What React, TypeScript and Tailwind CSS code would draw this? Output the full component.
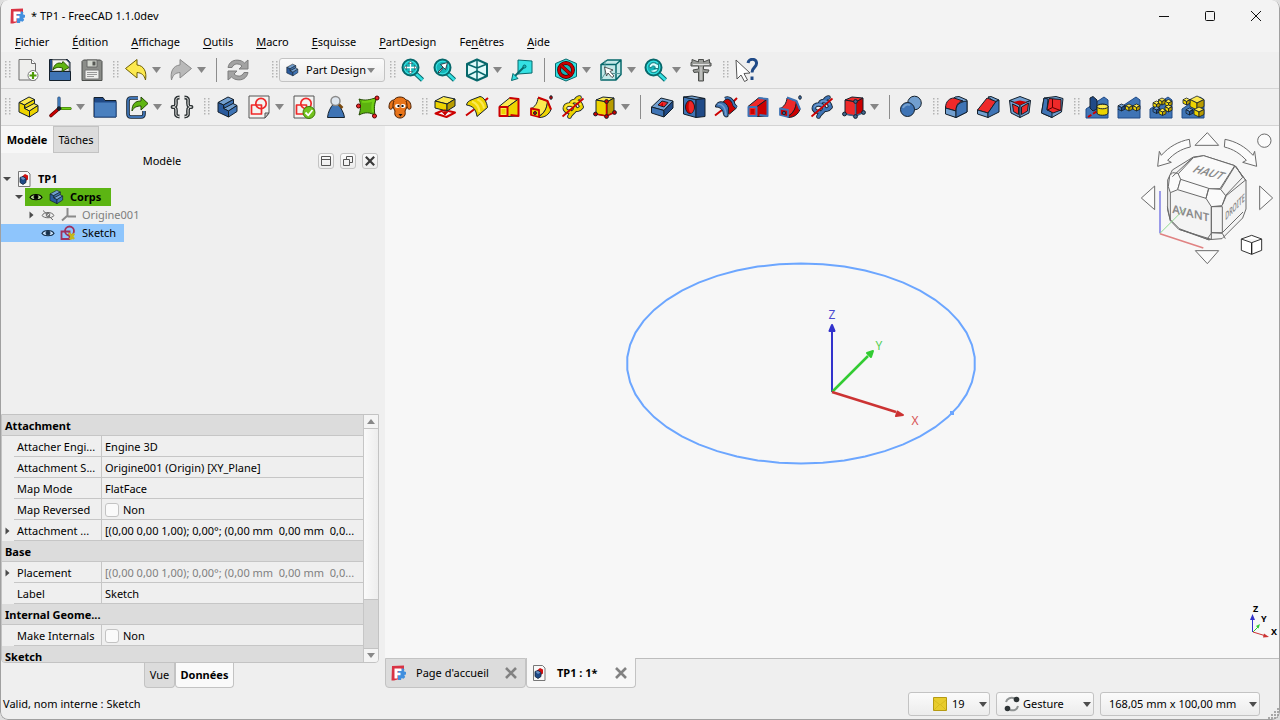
import type { ReactNode } from "react";

const K = "#14202c";
const Y1 = "#fce94f";
const Y2 = "#edd400";
const Y3 = "#b89c00";
const B1 = "#729fcf";
const B2 = "#3f74b5";
const B3 = "#204a87";
const R1 = "#ef2929";
const R2 = "#cc0000";
const T1 = "#34e0e2";
const T2 = "#16b5b8";
const T3 = "#06686b";

function Step({ a, b, c }: { a: string; b: string; c: string }) {
  return (
    <>
      <path d="M3 7.500 13 2l5.500 2.500L8.500 10z" fill={a} />
      <path d="M8.500 10l10-5.500v4l-9 5z" fill={c} />
      <path d="M8.500 13.500l9.500-5 4 2-8.500 5.500z" fill={a} />
      <path d="M3 7.500l5.500 2.500v3.500l5 2.500v6L3 17z" fill={b} />
      <path d="M13.500 16l8.500-5.500v6L13.500 22z" fill={c} />
    </>
  );
}

function Cube({ x, y, s, a, b, c }: { x: number; y: number; s: number; a: string; b: string; c: string }) {
  const h = s / 2;
  const q = s / 4;
  return (
    <g strokeWidth="0.8">
      <path d={`M${x} ${y + q}l${h} ${-q} ${h} ${q} ${-h} ${q}z`} fill={a} />
      <path d={`M${x} ${y + q}l${h} ${q}v${h}l${-h} ${-q}z`} fill={b} />
      <path d={`M${x + s} ${y + q}l${-h} ${q}v${h}l${h} ${-q}z`} fill={c} />
    </g>
  );
}

const yc = { a: Y1, b: Y2, c: Y3 };
const bc = { a: B1, b: B2, c: B3 };

const loupe = (
  <>
    <path d="M14.500 15.500l7 6.500" stroke={T3} strokeWidth="4.500" />
    <path d="M14.500 15.500l7 6.500" stroke={T1} strokeWidth="2.500" />
    <circle cx="9.500" cy="9.500" r="8" fill={T1} stroke={T3} strokeWidth="2" />
    <circle cx="9.500" cy="9.500" r="5.800" fill={T2} stroke="none" />
  </>
);

const loftShape = (f1: string, f2: string, edge: string) => (
  <>
    <path d="M2 11.500 12.500 3l9 1-11 8z" fill={f1} />
    <path d="M10.500 12l11-8v17l-11 .5z" fill={f2} />
    <path d="M12.500 3l9 1v17l-8-1" fill="none" stroke={edge} strokeWidth="2" />
    <path d="M2.500 12h8v9h-8z" fill={f1} stroke={edge} strokeWidth="2" />
    <path d="M4.500 14h4v5h-4z" fill={f2} stroke="none" />
  </>
);

const pipeShape = (f1: string, f2: string, edge: string) => (
  <>
    <path d="M2 13.500C6 12 8.500 8 9 3l9.500 3c0 7-3 12-8.500 15z" fill={f1} />
    <path d="M10 21.500c5-3 8-8 8.500-15.500l3.500 8.500c-2 5-6 8-12 8z" fill={f2} />
    <path d="M9 2.500l9.500 3.500 3.500 8.500" fill="none" stroke={edge} strokeWidth="2" />
    <path d="M2 13.500l8 1.500v7l-8-2z" fill={f2} stroke={edge} strokeWidth="1.800" />
    <circle cx="6" cy="18" r="1.500" fill={edge} />
    <ellipse cx="22" cy="2.500" rx="1.300" ry="1.800" fill={edge} />
  </>
);

const helixShape = (f1: string, f2: string) => {
  const coil = "M4 14C3 8 13 8 14.500 14M10 8.500c1-4 9-3 10.500 3.500M14.500 14C13 17.500 9.500 18 8.500 21.500M15 5c1-1.500 2-2.500 3.500-2.500M4 14c.5 2 3 3 5 2.500M14.500 14c2 1.500 4 .5 6-2";
  return (
    <>
      <g fill="none" strokeLinecap="round">
        <path d={coil} strokeWidth="4.600" />
        <path d={coil} stroke={f1} strokeWidth="3" />
        <path d="M4.500 12C6 8.500 12 8.500 13.500 12.500M11 7c2-2 7-1 8.500 2.500" stroke={f2} strokeWidth="1.300" />
      </g>
      <path d="M1.500 21.500 22.500 3.500" stroke={R2} strokeWidth="1.800" />
    </>
  );
};

const primShape = (f1: string, f2: string, f3: string, dot: string) => (
  <>
    <path d="M3 5l7-3 11 1-7 4z" fill={f1} />
    <path d="M3 5l11 2v14L3 19z" fill={f2} />
    <path d="M14 7l7-4v14l-7 4z" fill={f3} />
    <path d="M13.500 7v14L2.500 19M13.500 21l8-3.500" fill="none" stroke={dot} strokeWidth="1.500" />
    <circle cx="13.500" cy="6.500" r="1.900" fill={dot} />
    <circle cx="2.500" cy="19" r="1.900" fill={dot} />
    <circle cx="13.500" cy="21.500" r="1.900" fill={dot} />
    <circle cx="21.500" cy="17.500" r="1.900" fill={dot} />
  </>
);

const wedge = <path d="M1 14 19 2l4 3v18H1z" fill={B2} stroke={B3} />;

const sketchBase = (
  <>
    <path d="M2 1h20v17l-4 5H2z" fill="#f4f4f2" stroke="#555" />
    <path d="M22 18h-4v5z" fill="#ccc" stroke="#555" />
    <path d="M4.500 10h10v9h-10z" fill="none" stroke={R1} strokeWidth="1.700" />
    <circle cx="14" cy="8.500" r="5.200" fill="none" stroke={R1} strokeWidth="1.700" />
  </>
);

const brace = "M9.500 2.500C5 2.500 6 5 6 8s-.5 4-3.500 4C5.500 12 6 13 6 16s-1 5.500 3.500 5.500M14.500 2.500c4.500 0 3.500 2.500 3.500 5.500s.5 4 3.500 4c-3 0-3.500 1-3.500 4s1 5.500-3.500 5.500";

const icons: Record<string, ReactNode> = {
  newDoc: (
    <>
      <path d="M3 1.500h12.500l4 4V22H3z" fill="#eeeeec" stroke="#6b6b6b" />
      <path d="M15.500 1.500v4h4" fill="#fff" stroke="#6b6b6b" />
      <circle cx="17" cy="17.500" r="5" fill="#fff" stroke="#777" />
      <path d="M17 14v7M13.500 17.500h7" stroke="#4e9a06" strokeWidth="2.200" />
    </>
  ),
  open: (
    <>
      <path d="M1.500 21V1.500h18l2.500 3V21z" fill={B3} />
      <path d="M4.500 2H18l3 3v8H4.500z" fill="#f4f4f4" stroke="#999" />
      <path d="M1.500 13.500h21v9h-21z" fill={B2} />
      <path d="M5 12c1-6 5-8 9-6.500l1-2 6 6-7 4 .5-3.500C11 9 7.500 9 5 12z" fill="#5fb512" stroke="#2d5a05" />
    </>
  ),
  save: (
    <>
      <path d="M2 3.500 3.500 2h17L22 3.500v19H2z" fill="#8b8d89" stroke="#4d4f4c" />
      <path d="M7 2h10v7H7z" fill="#d3d7cf" stroke="#666" />
      <path d="M12.500 3.500h3v4h-3z" fill="#555753" stroke="none" />
      <path d="M5 12h14v9H5z" fill="#eeeeec" stroke="#777" />
      <path d="M7 14.500h10M7 16.500h10M7 18.500h7" stroke="#999" />
    </>
  ),
  undo: <path d="M1.500 10.500 13 1.500V7c7 .5 10 7 8.500 15C20 17 18 15 13 14.500V20z" fill={Y1} stroke="#6d5d00" />,
  redo: <path d="M22.500 10.500 11 1.500V7C4 7.500 1 14 2.500 22 4 17 6 15 11 14.500V20z" fill="#b9b9b9" stroke="#8a8a8a" />,
  refresh: (
    <g fill="#a3a3a3" stroke="#7d7d7d">
      <path d="M2 9.500C3 4 8 1 14 2.500c2 .5 3 1.200 4.500 2.500L22 2v9h-9l3-3C13 5 8 5 6 9.500z" />
      <path d="M22 14.500c-1 5.500-6 8.500-12 7-2-.5-3-1.200-4.500-2.500L2 22v-9h9l-3 3c3 3 8 3 10-1.500z" />
    </g>
  ),
  body: <Step a={B1} b="#2a5a9c" c={B2} />,
  part: <Step a={Y1} b={Y2} c={Y2} />,
  fitAll: (
    <>
      {loupe}
      <path d="M9.500 4v11M4 9.500h11" stroke="#fff" strokeWidth="1.300" />
      <path d="M9.500 3l2 2.500h-4zM9.500 16l2-2.500h-4zM3 9.500l2.500-2v4zM16 9.500l-2.500-2v4z" fill="#fff" strokeWidth=".5" />
    </>
  ),
  fitSel: (
    <>
      {loupe}
      <path d="M5 14l5-5-2.500-2.500 7-2-2 7L10.500 9.500 6 15z" fill="#fff" strokeWidth=".8" />
    </>
  ),
  iso: (
    <g fill="#dffafa" stroke={T3} strokeWidth="2">
      <path d="M12 1.500 22 6v12l-10 4.500L2 18V6z" />
      <path d="M2 6l10 4 10-4M12 10v12M2 18l10-5 10 5M12 1.500v8" fill="none" strokeWidth="1.500" />
    </g>
  ),
  align: (
    <>
      <path d="M8 2l14 1v12l-14 1z" fill={T1} stroke={T3} />
      <path d="M14 9 4 19" stroke={T3} strokeWidth="2" />
      <path d="M1.500 22.500l1.500-7 5 5z" fill={T1} stroke={T3} />
      <circle cx="14.500" cy="8.500" r="1.500" fill={T2} stroke={T3} />
    </>
  ),
  drawStyle: (
    <>
      <path d="M12 1 22.500 5.500v13L12 23 1.500 18.500v-13z" fill={T1} stroke={T3} />
      <circle cx="12" cy="12" r="7" fill={T2} stroke="#3a0000" strokeWidth="3.800" />
      <circle cx="12" cy="12" r="7" fill="none" stroke={R2} strokeWidth="2.400" />
      <path d="M7 7.500l10 9" stroke="#3a0000" strokeWidth="3.600" />
      <path d="M7 7.500l10 9" stroke={R2} strokeWidth="2.400" />
    </>
  ),
  selBox: (
    <>
      <path d="M2 6.500 8.500 2H22l-5 4.500zM2 6.500h15V22H2zM17 6.500 22 2v14.500L17 22z" fill="#c4e8e8" stroke={T3} strokeWidth="1.500" />
      <path d="M6 2.500v13L2 22M6 15.500h15" fill="none" stroke="#5a9a9c" />
      <path d="M5.500 9l8.500 3-3 1.500 4 4.500-2 1.500-4-4.500-1.500 3z" fill="#fff" stroke="#333" strokeWidth=".8" />
    </>
  ),
  zoomSync: (
    <>
      {loupe}
      <path d="M5 8.500c1-4 6-5 8-2l1.500-1v5H10l1.500-1.500c-2-2-4-1-4.500 1zM14 11c-1 4-6 4-7.500 2" fill="#d9ffff" stroke={T3} strokeWidth=".8" />
    </>
  ),
  caliper: (
    <>
      <path d="M3 1.500 9.500 4V1.500h5V4l6-2.500V5H22v3h-7.500v3.500L20 12l-1.500 3-4-1v9h-5V14L5 14.500 4 12l5.500-1V8H2V4.500h1z" fill="#9a9c98" stroke="#4d4f4c" />
      <path d="M12 9v13M4 6.500h16" stroke="#e2e2e2" />
    </>
  ),
  help: (
    <>
      <path d="M2 2l14 13-6 .5 3.500 6.500-3 1.500-3.500-6.500-4 4z" fill="#fff" stroke="#555" />
      <path d="M14 5c.5-5 9-5 8.500.5 0 4-4.500 4-4.500 9" fill="none" stroke={B3} strokeWidth="3" />
      <path d="M16.500 18.500h3v3.500h-3z" fill={B3} stroke="none" />
    </>
  ),
  axes: (
    <g strokeLinecap="round">
      <path d="M11 13V3" stroke="#24466f" strokeWidth="3.200" />
      <path d="M11 13V3" stroke="#3f78b8" strokeWidth="2" />
      <path d="M12 13.500h10" stroke="#2f5b08" strokeWidth="3.200" />
      <path d="M12 13.500h10" stroke="#73d216" strokeWidth="2" />
      <path d="M10.500 14 3 20.500" stroke="#5e0000" strokeWidth="3.600" />
      <path d="M10.500 14 3 20.500" stroke={R2} strokeWidth="2.200" />
      <circle cx="11" cy="13.500" r="1.800" fill={K} />
    </g>
  ),
  folder: (
    <>
      <path d="M1 2.500h9l2 3H23V22H1z" fill={B3} />
      <path d="M1.500 7H23v15H1.500z" fill="#4a80bf" stroke={B3} />
    </>
  ),
  link: (
    <>
      <path d="M13 3H6Q3 3 3 6v13q0 3 3 3h10q3 0 3-3v-3" fill="none" stroke={K} strokeWidth="3.600" />
      <path d="M13 3H6Q3 3 3 6v13q0 3 3 3h10q3 0 3-3v-3" fill="none" stroke={B2} strokeWidth="1.800" />
      <path d="M7 16c0-7 3-10 9-10V2l7 6.500-7 6.500v-4c-4 0-7 1-9 5z" fill="#5fb512" stroke="#244a04" />
    </>
  ),
  braces: (
    <g fill="none">
      <path d={brace} stroke="#2e3436" strokeWidth="3.800" />
      <path d={brace} stroke="#eeeeec" strokeWidth="1" />
    </g>
  ),
  sketch: sketchBase,
  sketchOk: (
    <>
      {sketchBase}
      <circle cx="17" cy="17.500" r="6" fill="#73c21e" stroke="#3c7a06" />
      <path d="M13.500 17.500l2.800 2.800L20.500 15" fill="none" stroke="#fff" strokeWidth="1.800" />
    </>
  ),
  check: (
    <>
      <path d="M9.500 9h4.500c3 4 6 9 6.500 13.500H3.500C4 17 6.500 12 9.500 9z" fill={B2} />
      <circle cx="11.500" cy="6" r="4.500" fill="#dfe6ee" stroke="#8a8a8a" strokeWidth="1.500" />
      <path d="M15 9.500l3.500 3.500" stroke="#7a4a10" strokeWidth="2.500" />
    </>
  ),
  binder: (
    <>
      <path d="M3 4c6 2 10 1 18-1.500-3 6-3 12-2 18C14 17 9 17 3 20c2-6 2-11 0-16z" fill="#5cb30f" stroke="#244a04" />
      <path d="M6 6.500c5 1 8 0 12-1.500-2 4-2 8-1 12" fill="none" stroke="#73d216" strokeWidth="2" />
      <circle cx="21" cy="3" r="2" fill={R1} stroke="#500" />
      <circle cx="2.500" cy="11" r="2" fill={R1} stroke="#500" />
      <circle cx="18.500" cy="21" r="2" fill={R1} stroke="#500" />
    </>
  ),
  clone: (
    <>
      <path d="M6 5c2-4 10-4 12 0 3 0 5 3 5 7 0 3-3 3-4 0l-2 4c1 4-1 7-5 7s-6-3-5-7l-2-4c-1 3-4 3-4 0 0-4 2-7 5-7z" fill="#e8741a" stroke="#4a1e00" />
      <path d="M6 6c-1 2-1 4-1 6M18 6c1 2 1 4 1 6" fill="none" stroke="#4a1e00" />
      <ellipse cx="9.500" cy="11" rx="2.500" ry="2" fill="#fff" stroke="none" />
      <ellipse cx="15" cy="11" rx="2.500" ry="2" fill="#fff" stroke="none" />
      <path d="M9.500 10h2v2h-2zM13.500 10h2v2h-2zM10.500 19h4l-2 2.500z" fill="#111" stroke="none" />
    </>
  ),
  pad: (
    <>
      <path d="M2.500 18.500 11 15l11 2.500-8.500 4.500z" fill="#f4f4f4" stroke={R2} strokeWidth="2" />
      <path d="M2 6l8.500-4.500L22 4l-8 5z" fill={Y1} />
      <path d="M2 6l12 3v7L2 13z" fill={Y2} />
      <path d="M14 9l8-5v7l-8 5z" fill={Y3} />
      <path d="M12 14v4M9.500 17l2.500 3 2.500-3z" fill={R2} stroke={R2} />
    </>
  ),
  revolve: (
    <>
      <path d="M17 8l6-5M1 20.500l8-6" stroke={R2} strokeWidth="2" />
      <path d="M1.500 10C2 7 4 6 6 5l9-3.500c4 .5 7 6 7.500 11L12 21.500C11.500 18 10.500 15.500 9 13.500 7 11.500 5 10.500 1.500 10z" fill={Y2} />
      <path d="M7 6.500c4 1.500 7 5 7.500 10.500M12.500 4.500c3.500 1.500 6 4.500 6.500 9" fill="none" stroke={Y1} strokeWidth="2.200" />
    </>
  ),
  loft: loftShape(Y1, Y2, R2),
  pipe: pipeShape(Y1, Y2, R2),
  helix: helixShape(Y2, Y1),
  prim: primShape(Y1, Y2, Y3, R2),
  pocket: (
    <>
      <path d="M1.500 12 11 3l12 3-9 9.500z" fill={B1} />
      <path d="M1.500 12 14 15.500V22L1.500 18z" fill={B2} />
      <path d="M14 15.500 23 6v7l-9 9z" fill={B3} />
      <path d="M8 10l4-4 6 1.500-4 4.500z" fill={R1} />
      <path d="M10 10.500l3-3v3.500" fill={R2} stroke="none" />
    </>
  ),
  hole: (
    <>
      <path d="M1.500 2 14 4.500v18L1.500 19z" fill={B2} />
      <path d="M1.500 2 10 1l13 2.500-9 1z" fill={B1} />
      <path d="M14 4.500l9-1v18l-9 1z" fill={B3} />
      <ellipse cx="8" cy="12" rx="4.500" ry="6.500" fill={R2} />
      <path d="M8 6c5 2 5 10 1 12.500C6 16 6 9 8 6z" fill={R1} stroke="none" />
    </>
  ),
  groove: (
    <>
      <path d="M17 9l6-6M1 20.500l7-5.500" stroke={R2} strokeWidth="2" />
      <path d="M9 7.500C12 1.500 18 2 20 7l2.500 6-7 6L10 15z" fill={R2} />
      <path d="M1.500 11C3 5 12 5 14.500 13L14 21.500c-2 1-4 0-4.500-2-.5-5-3-7.500-8-7.500z" fill={B2} />
      <path d="M11 3.500C15 1.500 19 5 20 10l2.500 2.500" fill="none" strokeWidth="3.200" />
      <path d="M11 3.500C15 1.500 19 5 20 10l2.500 2.500" fill="none" stroke={B2} strokeWidth="1.800" />
      <path d="M4 9.500c4.500-1 7.500 3 8 11" fill="none" stroke={B1} strokeWidth="1.500" />
    </>
  ),
  subLoft: loftShape(R1, R2, B2),
  subPipe: pipeShape(R1, R2, B2),
  subHelix: helixShape(B2, B1),
  subPrim: primShape(R1, R1, R2, "#44688f"),
  boolean: (
    <>
      <circle cx="15.500" cy="8" r="6.800" fill={B1} />
      <circle cx="8.500" cy="14.500" r="7" fill={B2} />
      <path d="M4 13c1-3 4-4 7-3" fill="none" stroke={B1} strokeWidth="2" />
    </>
  ),
  fillet: (
    <>
      <path d="M11 2l4-.5 8 3.500v12l-11 5.500L1.500 18v-6z" fill={B1} />
      <path d="M1.500 13C1.500 6 6 3 10 3l9 3c-5 1-7 4-7 10z" fill={R1} />
      <path d="M12 16v6.500L1.500 19v-6z" fill={B1} />
      <path d="M12 22.500V16c0-6 3-9 11-10v11z" fill={B2} />
    </>
  ),
  chamfer: (
    <>
      <path d="M12 2l3-.5 8 3.500-4 2z" fill={B1} />
      <path d="M1.500 15 11 3l9 3.500L12 18z" fill={R1} />
      <path d="M1.500 15 12 18v4.500L1.500 19z" fill={B1} />
      <path d="M12 22.500V18l8-11.500 3-1.500v12z" fill={B2} />
    </>
  ),
  draft: (
    <>
      <path d="M1.500 5.500 12 1.500l10.500 4L12 10z" fill={B1} />
      <path d="M1.500 5.500 12 10v12.500L3 18z" fill={B1} />
      <path d="M22.500 5.500 12 10v12.500L21 18z" fill={B1} />
      <path d="M4.500 9l6 3v7.500l-5-3zM20.500 8l-7 4v7.500l6-3.500z" fill={R1} />
      <path d="M12 5.500l7 1.500-7 3-7-3z" fill={R2} stroke="none" />
    </>
  ),
  shell: (
    <>
      <path d="M4 3 16 1.500l7 2L21.500 17 12 22.500 1.500 18z" fill={B1} />
      <path d="M4 3l-2.500 15L12 22.500V17L7 15 8 4z" fill={B2} />
      <path d="M9 3.500l12 1V15l-8 3-6-3.500z" fill={R1} />
      <path d="M12.500 4v8.500L7.500 15M12.500 12.500l8 3" fill="none" stroke="#5a0000" />
    </>
  ),
  mirror: (
    <>
      <path d="M1 14l12-8 6-4 4 3v18H1z" fill={B2} stroke={B3} />
      <path d="M5 3l3-1.500L12 5v9l-4 2-3-3z" fill={B3} />
      <path d="M3 22 23 9" stroke={R2} strokeWidth="2" strokeDasharray="4 2" />
      <path d="M12 11.500c0-3 11-3 11 0V18c0 3-11 3-11 0z" fill={Y2} />
      <ellipse cx="17.500" cy="11.500" rx="5.500" ry="2.300" fill={Y1} />
    </>
  ),
  linear: (
    <>
      {wedge}
      <Cube x={1} y={9} s={7} {...bc} />
      <Cube x={8.500} y={9} s={7} {...yc} />
      <Cube x={16} y={9} s={7} {...yc} />
    </>
  ),
  polar: (
    <>
      {wedge}
      <Cube x={4} y={6} s={7} {...yc} />
      <Cube x={9.500} y={3} s={7} {...yc} />
      <Cube x={16} y={4.500} s={7} {...yc} />
      <Cube x={16} y={10} s={7} {...yc} />
      <Cube x={4} y={11.500} s={7} {...bc} />
      <Cube x={10} y={13.500} s={7} {...yc} />
    </>
  ),
  multi: (
    <>
      {wedge}
      <Cube x={9} y={1} s={14} {...yc} />
      <Cube x={2} y={3} s={7} {...yc} />
      <Cube x={5} y={13} s={7} {...bc} />
      <Cube x={13} y={12} s={10} {...yc} />
    </>
  ),
};

function Icon({ name, className = "size-6" }: { name: string; className?: string }) {
  return (
    <svg viewBox="0 0 24 24" className={className} fill="none" stroke={K} strokeWidth="1" strokeLinejoin="round" aria-hidden="true">
      {icons[name]}
    </svg>
  );
}

function Caret({ className = "" }: { className?: string }) {
  return (
    <svg viewBox="0 0 8 5" className={`h-[5px] w-2 ${className}`} aria-hidden="true">
      <path d="M0 0h8L4 5z" fill="currentColor" />
    </svg>
  );
}

function Tool({ name, label, menu = false }: { name: string; label: string; menu?: boolean }) {
  return (
    <div className="flex shrink-0 items-center">
      <button type="button" aria-label={label} title={label} className="flex h-8 w-8 items-center justify-center">
        <Icon name={name} />
      </button>
      {menu && (
        <button type="button" aria-label={`${label} : options`} className="flex h-8 w-[13px] items-center text-[#868686]">
          <svg viewBox="0 0 9 6" className="h-1.5 w-[9px]" aria-hidden="true">
            <path d="M0 0h9L4.500 6z" fill="currentColor" />
          </svg>
        </button>
      )}
    </div>
  );
}

function Handle() {
  return (
    <div className="flex w-3 shrink-0 justify-end pr-px">
      <svg viewBox="0 0 6 18" className="h-[18px] w-1.5" aria-hidden="true">
        {[0, 3, 6, 9, 12, 15].map((y) => (
          <path key={y} d={`M0 ${y}h1.500v1.500H0zM4 ${y}h1.500v1.500H4z`} fill="#b4b4b4" />
        ))}
      </svg>
    </div>
  );
}

function Sep() {
  return (
    <div className="flex w-3 shrink-0 justify-center">
      <div className="h-6 w-px bg-[#8c8c8c]" />
    </div>
  );
}

function Toolbar({ label, className = "", children }: { label: string; className?: string; children: ReactNode }) {
  return (
    <div role="toolbar" aria-label={label} className={`flex shrink-0 items-center ${className}`}>
      <Handle />
      {children}
    </div>
  );
}

function Logo({ className }: { className: string }) {
  return (
    <svg viewBox="0 0 16 16" className={className} aria-hidden="true">
      <path d="M2 1 14 .5V5l-3 .5v8l-7 2H1.500z" fill="#d93344" />
      <path d="M9 4l2.500.5 1-1.500 2 1.500-.7 1.800L16 7v2.500l-1.800.5 1 2-1.700 1.700-2-.8-.5 2-3 .1V8z" fill="#418fde" />
      <path d="M4.500 3.500h7V6H7.500v1.800h3v2.400h-3v3.300h-3z" fill="#fff" />
    </svg>
  );
}

function DocIcon({ className }: { className: string }) {
  return (
    <svg viewBox="0 0 14 16" className={className} strokeLinejoin="round" aria-hidden="true">
      <path d="M1.500.5h9l2.500 2.500v12.500H1.500z" fill="#f8f8f8" stroke="#777" />
      <path d="M5 5.500 8 3l3 1.500v4L7 11z" fill="#d01010" />
      <path d="M3 6.500 6 5.500l3 2v4L6 13.500l-3-2z" fill="#1f4a86" stroke="#13233a" strokeWidth=".8" />
      <path d="M3.500 6.800 6 6l2.500 1.600L6 9z" fill="#6c93c4" />
    </svg>
  );
}

function Eye({ off = false, className = "text-black" }: { off?: boolean; className?: string }) {
  return (
    <svg viewBox="0 0 14 12" className={`h-3 w-3.5 ${className}`} fill="none" stroke="currentColor" aria-hidden="true">
      <path d="M1 6.500C3 2.500 11 2.500 13 6.500 11 9.500 3 9.500 1 6.500z" fill={off ? "none" : "#ffffff88"} strokeWidth={off ? 1 : 1.200} />
      <circle cx="7" cy="6" r={off ? 1.800 : 2} fill={off ? "none" : "currentColor"} />
      {off && <path d="M2 1.500l10 9.500" />}
    </svg>
  );
}

function Twist({ open = false }: { open?: boolean }) {
  return (
    <svg viewBox="0 0 10 10" className="size-2.5 text-[#4a4a4a]" aria-hidden="true">
      <path d={open ? "M1 3h8L5 7z" : "M3.500 1.500v7l4-3.500z"} fill="currentColor" />
    </svg>
  );
}

const menus: [string, string, string][] = [
  ["", "F", "ichier"],
  ["", "É", "dition"],
  ["", "A", "ffichage"],
  ["", "O", "utils"],
  ["", "M", "acro"],
  ["", "E", "squisse"],
  ["", "P", "artDesign"],
  ["Fe", "n", "êtres"],
  ["", "A", "ide"],
];

type Row = { head: string } | { key: string; value: string; check?: boolean; expand?: boolean; dim?: boolean };

const rows: Row[] = [
  { head: "Attachment" },
  { key: "Attacher Engi...", value: "Engine 3D" },
  { key: "Attachment S...", value: "Origine001 (Origin) [XY_Plane]" },
  { key: "Map Mode", value: "FlatFace" },
  { key: "Map Reversed", value: "Non", check: true },
  { key: "Attachment ...", value: "[(0,00 0,00 1,00); 0,00°; (0,00 mm  0,00 mm  0,0...", expand: true },
  { head: "Base" },
  { key: "Placement", value: "[(0,00 0,00 1,00); 0,00°; (0,00 mm  0,00 mm  0,0...", expand: true, dim: true },
  { key: "Label", value: "Sketch" },
  { head: "Internal Geome..." },
  { key: "Make Internals", value: "Non", check: true },
  { head: "Sketch" },
];

function Properties() {
  return (
    <div className="mx-px flex h-[249px] shrink-0 overflow-hidden rounded-b-sm border border-[#c3c3c3]">
      <table className="w-full flex-1 table-fixed border-separate border-spacing-0 self-start">
        <colgroup>
          <col className="w-3" />
          <col className="w-[88px]" />
          <col />
        </colgroup>
        <tbody>
          {rows.map((r, i) =>
            "head" in r ? (
              <tr key={i} className="h-[21px]">
                <th colSpan={3} scope="colgroup" className="border-r border-b border-[#c6c6c6] bg-[#dcdcdc] pt-0.5 pl-[3px] text-left leading-[18px] font-bold">
                  {r.head}
                </th>
              </tr>
            ) : (
              <tr key={i} className="h-[21px]">
                <td className="p-0">{r.expand && <Twist />}</td>
                <td className="overflow-hidden border-r border-b border-[#c6c6c6] pt-0.5 pl-[3px] leading-[18px] whitespace-nowrap">{r.key}</td>
                <td className={`overflow-hidden border-r border-b border-[#c6c6c6] pt-0.5 pl-[3px] leading-[18px] whitespace-pre ${r.dim ? "text-[#808080]" : ""}`}>
                  {r.check ? (
                    <label className="flex items-center gap-1">
                      <input type="checkbox" className="size-3.5 appearance-none rounded-[3px] border border-[#c3c3c3] bg-[#fafafa]" />
                      {r.value}
                    </label>
                  ) : (
                    r.value
                  )}
                </td>
              </tr>
            ),
          )}
        </tbody>
      </table>
      <div className="flex w-3.5 shrink-0 flex-col bg-[#d8d8d8]">
        <button type="button" aria-label="Défiler vers le haut" className="flex h-3.5 items-center justify-center border-b border-[#c3c3c3] bg-[#f4f4f4] text-[#888]">
          <Caret className="w-1.5 rotate-180" />
        </button>
        <div className="h-[171px] border-b border-[#c3c3c3] bg-gradient-to-r from-[#fafafa] to-[#ededed]" />
        <div className="flex-1" />
        <button type="button" aria-label="Défiler vers le bas" className="flex h-3.5 items-center justify-center border-t border-[#c3c3c3] bg-[#f4f4f4] text-[#888]">
          <Caret className="w-1.5" />
        </button>
      </div>
    </div>
  );
}

function Tree() {
  return (
    <ul role="tree" className="flex-1">
      <li role="treeitem" className="flex h-[18px] items-center pl-0.5">
        <Twist open />
        <DocIcon className="ml-[5px] h-4 w-3.5" />
        <span className="ml-[7px] font-bold">TP1</span>
      </li>
      <li role="treeitem" className="flex h-[18px] items-center pl-3.5">
        <Twist open />
        <span className="ml-px flex h-[18px] items-center bg-[#5cb513] pr-2.5 pl-1">
          <Eye />
          <Icon name="body" className="ml-[5px] size-4" />
          <span className="ml-1.5 font-bold">Corps</span>
        </span>
      </li>
      <li role="treeitem" className="flex h-[18px] items-center pl-[26px] text-[#7d7d7d]">
        <Twist />
        <span className="flex items-center pl-1">
          <Eye off className="ml-px text-[#6a6a6a]" />
          <svg viewBox="0 0 16 16" className="ml-1.5 size-4" stroke="#8a8a8a" strokeWidth="2" aria-hidden="true">
            <path d="M6.500 1v8.500M6 9l-5 4.500M6.500 9.500H15" fill="none" />
          </svg>
          <span className="ml-[5px]">Origine001</span>
        </span>
      </li>
      <li role="treeitem" aria-selected="true" className="flex">
        <span className="flex h-[18px] items-center bg-[#8ec5fc] pr-2 pl-[41px]">
          <Eye className="text-[#16304a]" />
          <svg viewBox="0 0 16 16" className="ml-[5px] size-4" fill="none" stroke="#a0305c" strokeWidth="1.800" aria-hidden="true">
            <path d="M1.500 6.500h8v7.500h-8z" />
            <circle cx="9.500" cy="6" r="4.500" />
            <path d="M9 8l5 6M14 8.500l-4 6" stroke="#c4b81a" strokeWidth="2.500" />
          </svg>
          <span className="ml-1.5">Sketch</span>
        </span>
      </li>
    </ul>
  );
}

const ring = Array.from({ length: 50 }, (_, i) => {
  const a = ((i + 0.5) / 50) * Math.PI * 2;
  return `${(801 + 174 * Math.cos(a)).toFixed(1)},${(363.5 + 100 * Math.sin(a)).toFixed(1)}`;
}).join(" ");

function Scene() {
  return (
    <svg viewBox="385 126 895 532" className="absolute inset-0 h-full w-full" aria-label="Vue 3D">
      <polygon points={ring} fill="none" stroke="#6ca6ff" strokeWidth="2" />
      <path d="M950 411h4v4h-4z" fill="#6ca6ff" />
      <path d="M832 392v-62" stroke="#3333cc" strokeWidth="2" />
      <path d="M832 325l2.500 6h-5z" fill="#3333cc" stroke="#3333cc" strokeWidth="2" strokeLinejoin="round" />
      <path d="M832 392l36-36" stroke="#33cc33" strokeWidth="2.500" />
      <path d="M873 351l-2 6-4-4z" fill="#33cc33" stroke="#33cc33" strokeWidth="2" strokeLinejoin="round" />
      <path d="M832 392l64 20" stroke="#cc3333" strokeWidth="2.500" />
      <path d="M903 415l-7 1 1.500-4.500z" fill="#cc3333" stroke="#cc3333" strokeWidth="2" strokeLinejoin="round" />
      <g fontSize="12" textAnchor="middle">
        <text x="832" y="319" fill="#4a4ad0">Z</text>
        <text x="879" y="350" fill="#55d055">Y</text>
        <text x="915" y="425" fill="#d85555">X</text>
      </g>
    </svg>
  );
}

function NavCube() {
  return (
    <svg viewBox="0 18 450 432" className="absolute top-0 right-0 h-36 w-[150px]" fill="none" stroke="#6b6b6b" strokeWidth="3" strokeLinejoin="round" aria-label="Cube de navigation">
      <path d="M232 38l34 38h-71zM232 431l-36-39h70zM34 234l40-36v71zM428 234l-39-36v71z" fill="#fbfbfb" />
      <path d="M178 58c-32 6-61 22-84 48l-6-12-5 45 41-12-11-6c18-20 40-34 68-40z" fill="#fbfbfb" />
      <path d="M285 58c32 6 61 22 84 48l5-12 6 45-42-12 11-6c-18-20-40-34-66-40z" fill="#fbfbfb" />
      <circle cx="403" cy="62" r="20" fill="#fbfbfb" />
      <path d="M190 111l31-4 94 30 33 45v85l-10 27-62 62-40 3-88-33-28-28-7-28v-90l14-30z" fill="#f4f4f4" />
      <path d="M221 107l93 30-44 69-34 1-94-29 4-18 44-47z" fill="#fafafa" />
      <path d="M144 160l8 18-9 31-22 9-6-18 4-33 9-9z" fill="#fafafa" />
      <path d="M152 178l84 27-8 30-85-26zM236 206l36 2 15 19-11 30-32 3-16-25z" fill="#fafafa" />
      <path d="M121 218v84l25 26 98 30v-98M244 260h33v78h-33zM277 255l12-28 59-48M272 208l43-70 33 44M277 338l62-62M231 358l14-20 32 2 9 16M286 227l52-55-20-33M112 260l9 42M127 170l60-56M148 328l90 32" />
      <path d="M90 213v127" stroke="#8888e6" strokeWidth="5" />
      <path d="M90 340l75-75" stroke="#8fdc8f" strokeWidth="3" />
      <path d="M90 341l130 43" stroke="#e08282" strokeWidth="5" />
      <g fill="#8a8a8a" stroke="none" fontWeight="600" textAnchor="middle">
        <text transform="translate(228 167) rotate(15) skewX(-28)" fontSize="33">HAUT</text>
        <text transform="translate(182 292) skewY(14)" fontSize="34">AVANT</text>
        <text transform="translate(315 272) rotate(-46) skewX(-46)" fontSize="23">DROITE</text>
      </g>
      <path d="M365 346l30 11v34l-30 12-31-12v-34zM334 357l31 11 30-11" fill="#fff" stroke="#333" />
      <path d="M365 368v35" stroke="#222" strokeWidth="4" />
    </svg>
  );
}

function AxisCross() {
  return (
    <svg viewBox="0 0 32 40" className="absolute right-0 bottom-4 h-10 w-8" aria-label="Axes">
      <g fontSize="9" fontWeight="700" fill="#000">
        <text x="5" y="10">Z</text>
        <text x="13" y="20">Y</text>
        <text x="23" y="33">X</text>
      </g>
      <path d="M4.500 30V15" stroke="#3333cc" />
      <path d="M4.500 12l2.500 6H2z" fill="#3333cc" />
      <path d="M5 30l5-5" stroke="#33cc33" />
      <path d="M12 22l-1.500 4.500L8 24z" fill="#33cc33" />
      <path d="M5 30l13 4" stroke="#cc3333" />
      <path d="M21 35l-6 .5 1-4z" fill="#cc3333" />
    </svg>
  );
}

function Cross({ className = "" }: { className?: string }) {
  return (
    <svg viewBox="0 0 12 12" className={className} stroke="currentColor" strokeWidth="2.600" aria-hidden="true">
      <path d="M1 1l10 10M11 1 1 11" />
    </svg>
  );
}

const box = "rounded-[3px] border border-[#c3c3c3] bg-gradient-to-b from-[#fbfbfb] to-[#ececec]";

function StatusSelect({ label, value, icon, width, pad }: { label: string; value: string; icon?: ReactNode; width: string; pad: string }) {
  return (
    <div className={`relative flex h-6 items-center ${width}`}>
      <select aria-label={label} className={`h-full w-full appearance-none ${box} ${pad}`}>
        <option>{value}</option>
      </select>
      {icon}
      <Caret className="pointer-events-none absolute right-[3px] text-[#4d4d4d]" />
    </div>
  );
}

export default function App() {
  return (
    <div className="bg-[#dedede]">
      <div className="relative flex h-screen flex-col overflow-hidden rounded-lg bg-[#efefef] font-['Noto_Sans','Open_Sans',sans-serif] text-[11px] leading-4 text-black">
        <header className="flex h-[31px] shrink-0 items-center bg-[#f3f3f3] pr-px pl-[9px]">
          <Logo className="size-4" />
          <h1 className="ml-1.5 flex-1">* TP1 - FreeCAD 1.1.0dev</h1>
          <button type="button" aria-label="Réduire" className="flex h-full w-[46px] items-center justify-center">
            <svg viewBox="0 0 10 10" className="size-2.5" stroke="#111" aria-hidden="true"><path d="M0 5.500h10" /></svg>
          </button>
          <button type="button" aria-label="Agrandir" className="flex h-full w-[46px] items-center justify-center">
            <svg viewBox="0 0 10 10" className="size-2.5" fill="none" stroke="#111" aria-hidden="true"><rect x=".5" y=".5" width="9" height="9" rx="1" /></svg>
          </button>
          <button type="button" aria-label="Fermer" className="flex h-full w-[46px] items-center justify-center">
            <svg viewBox="0 0 10 10" className="size-2.5" stroke="#111" aria-hidden="true"><path d="M0 0l10 10M10 0 0 10" /></svg>
          </button>
        </header>
        <nav aria-label="Menu principal" className="flex h-[21px] shrink-0 items-center gap-px bg-[#f3f3f3] pl-1">
          {menus.map(([pre, u, post]) => (
            <button key={pre + u + post} type="button" className="px-[11px]">
              {pre}
              <span className="underline underline-offset-2">{u}</span>
              {post}
            </button>
          ))}
        </nav>

        <div className="flex h-[37px] shrink-0 items-center border-b border-[#d4d4d4]">
          <Toolbar label="Fichier">
            <Tool name="newDoc" label="Nouveau" />
            <Tool name="open" label="Ouvrir" />
            <Tool name="save" label="Enregistrer" />
          </Toolbar>
          <Toolbar label="Édition">
            <Tool name="undo" label="Annuler" menu />
            <Tool name="redo" label="Rétablir" menu />
            <Sep />
            <Tool name="refresh" label="Rafraîchir" />
          </Toolbar>
          <Toolbar label="Atelier" className="ml-[13px]">
            <div className="relative flex h-6 w-[106px] items-center">
              <select aria-label="Atelier" className={`h-full w-full appearance-none pl-[26px] ${box}`}>
                <option>Part Design</option>
              </select>
              <Icon name="body" className="pointer-events-none absolute left-1.5 size-3.5" />
              <Caret className="pointer-events-none absolute right-[10px] text-[#868686]" />
            </div>
          </Toolbar>
          <Toolbar label="Vue">
            <Tool name="fitAll" label="Tout afficher" />
            <Tool name="fitSel" label="Afficher la sélection" />
            <Tool name="iso" label="Vue isométrique" menu />
            <Tool name="align" label="Aligner" />
            <Sep />
            <Tool name="drawStyle" label="Style de représentation" menu />
            <Tool name="selBox" label="Sélection" menu />
            <Tool name="zoomSync" label="Synchroniser la vue" menu />
            <Tool name="caliper" label="Mesurer" />
          </Toolbar>
          <Toolbar label="Aide" className="ml-px">
            <Tool name="help" label="Qu'est-ce que c'est ?" />
          </Toolbar>
        </div>

        <div className="flex h-[37px] shrink-0 items-center gap-px border-b border-[#d4d4d4]">
          <Toolbar label="Structure">
            <Tool name="part" label="Créer une pièce" />
            <Tool name="axes" label="Système de coordonnées" menu />
            <Tool name="folder" label="Créer un groupe" />
            <Tool name="link" label="Créer un lien" menu />
            <Tool name="braces" label="Variables" />
          </Toolbar>
          <Toolbar label="Part Design">
            <Tool name="body" label="Nouveau corps" />
            <Tool name="sketch" label="Nouvelle esquisse" menu />
            <Tool name="sketchOk" label="Valider l'esquisse" />
            <Tool name="check" label="Vérifier la géométrie" />
            <Tool name="binder" label="Forme liée" />
            <Tool name="clone" label="Cloner" />
          </Toolbar>
          <Toolbar label="Modélisation">
            <Tool name="pad" label="Protrusion" />
            <Tool name="revolve" label="Révolution" />
            <Tool name="loft" label="Lissage" />
            <Tool name="pipe" label="Balayage" />
            <Tool name="helix" label="Hélice" />
            <Tool name="prim" label="Primitive additive" menu />
            <Sep />
            <Tool name="pocket" label="Cavité" />
            <Tool name="hole" label="Perçage" />
            <Tool name="groove" label="Rainure" />
            <Tool name="subLoft" label="Lissage soustractif" />
            <Tool name="subPipe" label="Balayage soustractif" />
            <Tool name="subHelix" label="Hélice soustractive" />
            <Tool name="subPrim" label="Primitive soustractive" menu />
            <Sep />
            <Tool name="boolean" label="Opération booléenne" />
          </Toolbar>
          <Toolbar label="Habillage">
            <Tool name="fillet" label="Congé" />
            <Tool name="chamfer" label="Chanfrein" />
            <Tool name="draft" label="Dépouille" />
            <Tool name="shell" label="Coque" />
          </Toolbar>
          <Toolbar label="Transformations">
            <Tool name="mirror" label="Symétrie" />
            <Tool name="linear" label="Répétition linéaire" />
            <Tool name="polar" label="Répétition circulaire" />
            <Tool name="multi" label="Transformation multiple" />
          </Toolbar>
        </div>

        <div className="flex min-h-0 flex-1">
          <aside className="flex w-[385px] shrink-0 flex-col pr-[5px]">
            <div role="tablist" className="flex h-[27px] shrink-0 pl-px">
              <button role="tab" aria-selected="true" type="button" className="w-[52px] bg-[#f7f7f7] font-bold">Modèle</button>
              <button role="tab" aria-selected="false" type="button" className="w-[46px] border border-[#c3c3c3] bg-[#dcdcdc]">Tâches</button>
            </div>
            <div className="flex h-4 shrink-0 items-center gap-1.5 pr-0.5">
              <h2 className="flex-1 pl-3 text-center">Modèle</h2>
              <button type="button" aria-label="Replier" className={`flex size-4 items-center justify-center text-[#555] ${box}`}>
                <svg viewBox="0 0 10 10" className="size-2.5" fill="none" stroke="currentColor" aria-hidden="true"><path d="M.5.500h9v9h-9zM.5 3.500h9" /></svg>
              </button>
              <button type="button" aria-label="Détacher" className={`flex size-4 items-center justify-center text-[#555] ${box}`}>
                <svg viewBox="0 0 10 10" className="size-2.5" fill="none" stroke="currentColor" aria-hidden="true"><path d="M3.500 3.500v-3h6v6h-3M.5 3.500h6v6h-6z" /></svg>
              </button>
              <button type="button" aria-label="Fermer le panneau" className={`flex size-4 items-center justify-center text-[#3a3a3a] ${box}`}>
                <Cross className="size-2.5" />
              </button>
            </div>
            <div className="flex flex-1 flex-col pt-px">
              <Tree />
            </div>
            <Properties />
            <div role="tablist" className="flex h-[25px] shrink-0 justify-center pr-0.5">
              <button role="tab" aria-selected="false" type="button" className="w-[31px] rounded-b border border-t-0 border-[#c3c3c3] bg-[#dcdcdc]">Vue</button>
              <button role="tab" aria-selected="true" type="button" className="w-[59px] rounded-b border border-t-0 border-[#c3c3c3] bg-[#fafafa] font-bold">Données</button>
            </div>
          </aside>
          <main className="flex min-w-0 flex-1 flex-col">
            <div className="relative min-h-0 flex-1 bg-[#f7f7f7]">
              <Scene />
              <NavCube />
              <AxisCross />
            </div>
            <div role="tablist" className="flex h-[30px] shrink-0">
              <div className="flex w-[141px] items-center rounded-b border border-[#c3c3c3] bg-[#dcdcdc] pr-2 pl-1">
                <Logo className="size-4" />
                <button role="tab" aria-selected="false" type="button" className="flex-1 pl-2.5 text-left">Page d'accueil</button>
                <button type="button" aria-label="Fermer Page d'accueil" className="text-[#828282]"><Cross className="size-3" /></button>
              </div>
              <div className="flex w-[110px] items-center rounded-b border border-t-0 border-[#c3c3c3] bg-[#f7f7f7] pr-2 pl-[5px]">
                <DocIcon className="h-4 w-3.5" />
                <button role="tab" aria-selected="true" type="button" className="flex-1 pl-[11px] text-left font-bold">TP1 : 1*</button>
                <button type="button" aria-label="Fermer TP1" className="text-[#828282]"><Cross className="size-3" /></button>
              </div>
              <div className="flex-1 border-t border-[#bdbdbd]" />
            </div>
          </main>
        </div>

        <footer className="flex h-8 shrink-0 items-center gap-1.5 pr-5 pl-[3px]">
          <p className="flex-1">Valid, nom interne : Sketch</p>
          <StatusSelect
            label="Notifications"
            value="19"
            width="w-[82px]"
            pad="pl-[43px]"
            icon={
              <svg viewBox="0 0 14 14" className="pointer-events-none absolute left-[25px] size-3.5" aria-hidden="true">
                <path d="M.5.500h13v13H.5z" fill="#e8cc2c" stroke="#b59a12" />
                <path d="M1 13l6-6 6 6M1 3l6 5 6-5" fill="none" stroke="#d8bc1e" />
              </svg>
            }
          />
          <StatusSelect
            label="Style de navigation"
            value="Gesture"
            width="w-[98px]"
            pad="pl-[26px]"
            icon={
              <svg viewBox="0 0 16 16" className="pointer-events-none absolute left-2 size-4" fill="none" stroke="#8f9393" strokeWidth="2" aria-hidden="true">
                <path d="M2 6c1-4 5-5 9-3.500M14 10c-1 4-4 5-8 4" />
                <circle cx="12.500" cy="3.500" r="2.800" fill="#2e3436" stroke="none" />
                <circle cx="3.500" cy="12.500" r="2.800" fill="#2e3436" stroke="none" />
              </svg>
            }
          />
          <StatusSelect label="Dimensions" value="168,05 mm x 100,00 mm" width="w-40" pad="pl-2" />
        </footer>
        <svg viewBox="0 0 12 12" className="pointer-events-none absolute right-0 bottom-0 size-3" aria-hidden="true">
          <path d="M9 0h2v2H9zM6 3h2v2H6zM9 3h2v2H9zM3 6h2v2H3zM6 6h2v2H6zM9 6h2v2H9zM0 9h2v2H0zM3 9h2v2H3zM6 9h2v2H6z" fill="#a8a8a8" />
        </svg>
        <div className="pointer-events-none absolute inset-0 rounded-lg border border-t-0 border-[#a0a0a0]" />
      </div>
    </div>
  );
}
